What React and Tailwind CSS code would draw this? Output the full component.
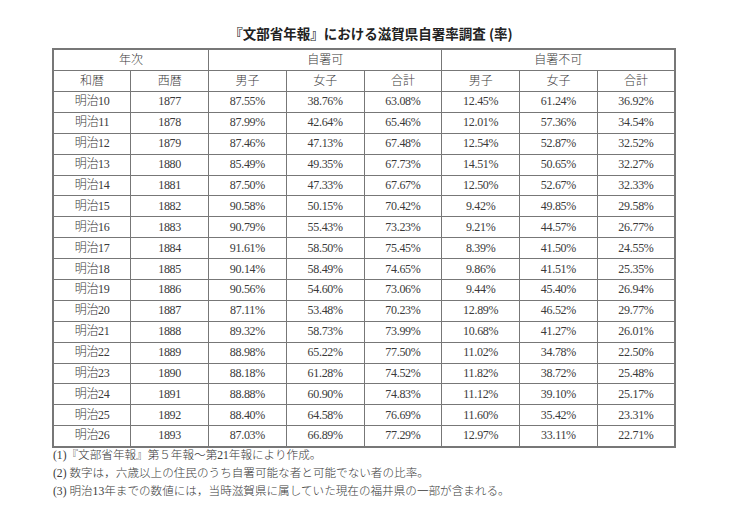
import React from "react";

const rows = [
  ["明治10", "1877", "87.55%", "38.76%", "63.08%", "12.45%", "61.24%", "36.92%"],
  ["明治11", "1878", "87.99%", "42.64%", "65.46%", "12.01%", "57.36%", "34.54%"],
  ["明治12", "1879", "87.46%", "47.13%", "67.48%", "12.54%", "52.87%", "32.52%"],
  ["明治13", "1880", "85.49%", "49.35%", "67.73%", "14.51%", "50.65%", "32.27%"],
  ["明治14", "1881", "87.50%", "47.33%", "67.67%", "12.50%", "52.67%", "32.33%"],
  ["明治15", "1882", "90.58%", "50.15%", "70.42%", "9.42%", "49.85%", "29.58%"],
  ["明治16", "1883", "90.79%", "55.43%", "73.23%", "9.21%", "44.57%", "26.77%"],
  ["明治17", "1884", "91.61%", "58.50%", "75.45%", "8.39%", "41.50%", "24.55%"],
  ["明治18", "1885", "90.14%", "58.49%", "74.65%", "9.86%", "41.51%", "25.35%"],
  ["明治19", "1886", "90.56%", "54.60%", "73.06%", "9.44%", "45.40%", "26.94%"],
  ["明治20", "1887", "87.11%", "53.48%", "70.23%", "12.89%", "46.52%", "29.77%"],
  ["明治21", "1888", "89.32%", "58.73%", "73.99%", "10.68%", "41.27%", "26.01%"],
  ["明治22", "1889", "88.98%", "65.22%", "77.50%", "11.02%", "34.78%", "22.50%"],
  ["明治23", "1890", "88.18%", "61.28%", "74.52%", "11.82%", "38.72%", "25.48%"],
  ["明治24", "1891", "88.88%", "60.90%", "74.83%", "11.12%", "39.10%", "25.17%"],
  ["明治25", "1892", "88.40%", "64.58%", "76.69%", "11.60%", "35.42%", "23.31%"],
  ["明治26", "1893", "87.03%", "66.89%", "77.29%", "12.97%", "33.11%", "22.71%"],
];

const serif = { fontFamily: '"Liberation Serif", "Noto Sans CJK JP", serif' };

export default function App() {
  return (
    <div className="w-[738px] h-[521px] bg-white overflow-hidden">
      <div className="pt-[22px] pl-[52px]">
        <div
          className="w-[622px] text-center font-bold text-[13.5px] leading-[22px] text-[#222] pl-[16px]"
          style={{ fontFamily: '"Noto Sans CJK JP", sans-serif' }}
        >
          『文部省年報』における滋賀県自署率調査 (率)
        </div>
        <table
          className="mt-[4px] w-[622px] table-fixed border-collapse border-2 border-[#777] text-[12px] text-[#3a3a3a] text-center font-light"
          style={serif}
        >
          <colgroup>
            {Array.from({ length: 8 }).map((_, i) => (
              <col key={i} className="w-[77.75px]" />
            ))}
          </colgroup>
          <thead>
            <tr className="h-[21px]">
              <th colSpan={2} className="font-light border border-[#777] p-0 leading-[20px]">年次</th>
              <th colSpan={3} className="font-light border border-[#777] p-0 leading-[20px]">自署可</th>
              <th colSpan={3} className="font-light border border-[#777] p-0 leading-[20px]">自署不可</th>
            </tr>
            <tr className="h-[21px]">
              {["和暦", "西暦", "男子", "女子", "合計", "男子", "女子", "合計"].map((h, i) => (
                <th key={i} className="font-light border border-[#777] p-0 leading-[20px]">{h}</th>
              ))}
            </tr>
          </thead>
          <tbody>
            {rows.map((r, ri) => (
              <tr key={ri} className="h-[20.9px]">
                {r.map((c, ci) => (
                  <td key={ci} className="border border-[#777] p-0 leading-[19px] tracking-[-0.3px]">{c}</td>
                ))}
              </tr>
            ))}
          </tbody>
        </table>
        <div className="-mt-[1px] pl-[1px] text-[11.6px] leading-[18px] text-[#3a3a3a] font-light" style={serif}>
          <div>(1)『文部省年報』第５年報～第21年報により作成。</div>
          <div>(2) 数字は，六歳以上の住民のうち自署可能な者と可能でない者の比率。</div>
          <div>(3) 明治13年までの数値には，当時滋賀県に属していた現在の福井県の一部が含まれる。</div>
        </div>
      </div>
    </div>
  );
}
